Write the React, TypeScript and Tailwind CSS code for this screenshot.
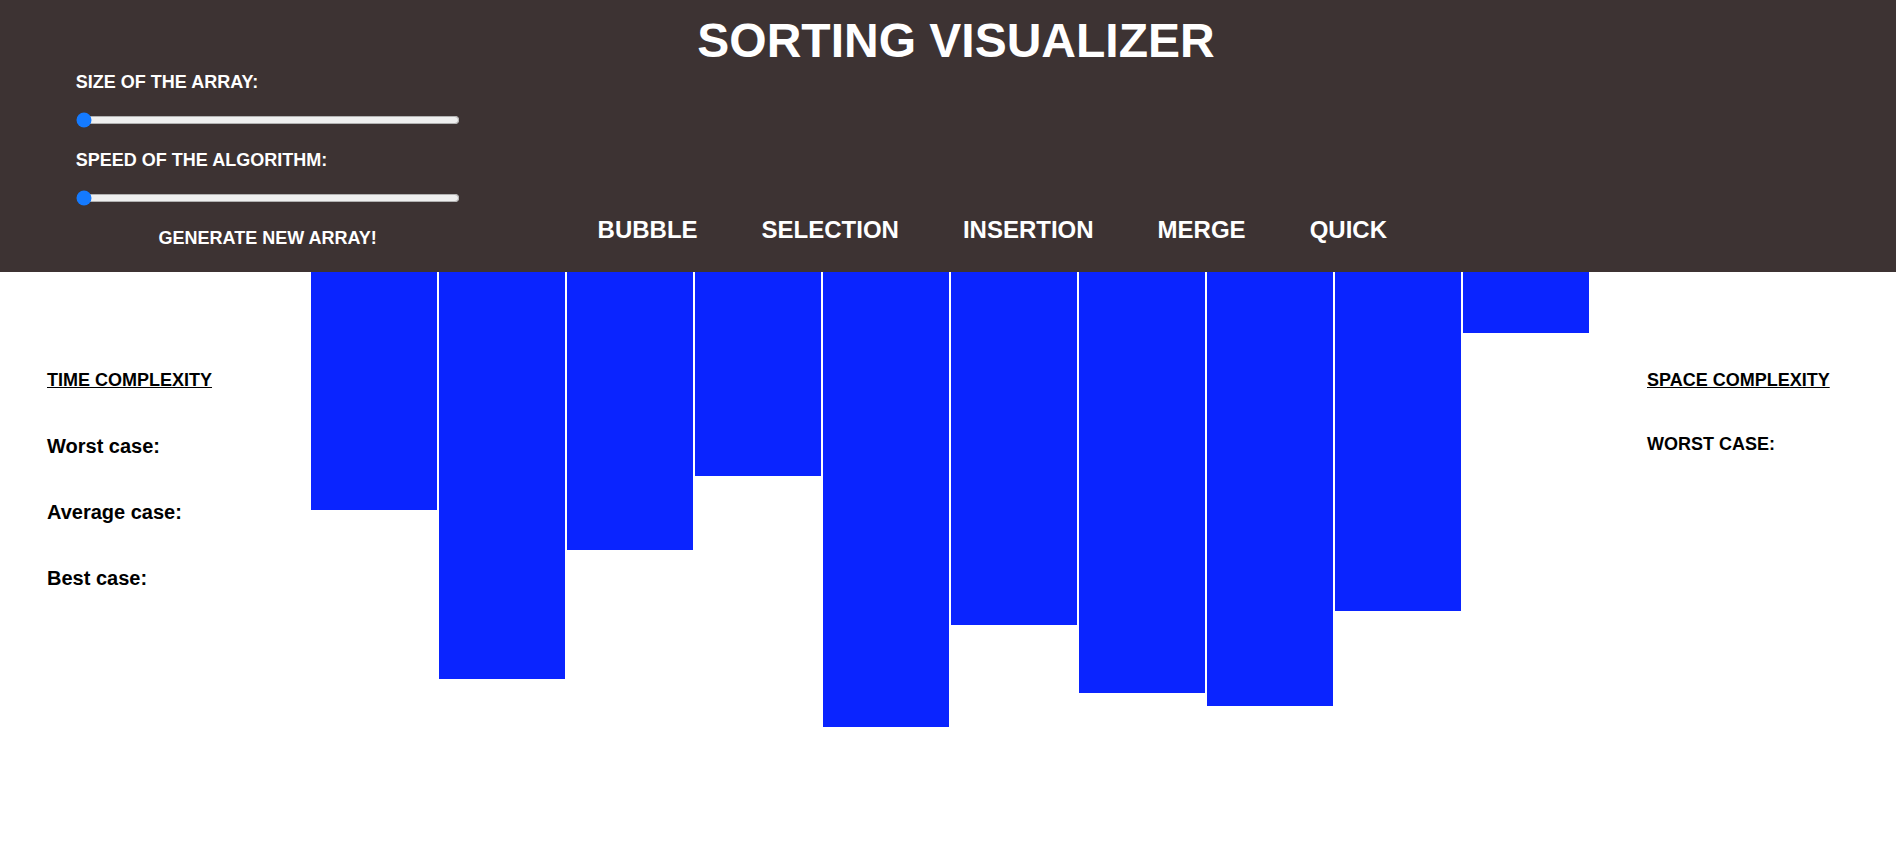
import { useState } from "react";

const UNIT = 6.787;
const INITIAL = [35, 60, 41, 30, 67, 52, 62, 64, 50, 9];
const ALGORITHMS = ["BUBBLE", "SELECTION", "INSERTION", "MERGE", "QUICK"];
const TIME_CASES = ["Worst case:", "Average case:", "Best case:"];

function Slider({ id, label }: { id: string; label: string }) {
  return (
    <div className="flex flex-col gap-[18px]">
      <label htmlFor={id} className="text-[18px] leading-6">
        {label}
      </label>
      <input
        id={id}
        type="range"
        min={0}
        max={100}
        defaultValue={0}
        className="m-0 h-4 w-full accent-[#147aff]"
      />
    </div>
  );
}

export default function App() {
  const [values, setValues] = useState(INITIAL);
  const generate = () =>
    setValues((current) => current.map(() => 5 + Math.floor(Math.random() * 65)));

  return (
    <div className="min-h-screen bg-white font-['Liberation_Sans',Arial,sans-serif] font-bold text-black">
      <header className="bg-[#3d3333] px-[4%] pt-3 pb-[22px] text-white">
        <h1 className="pl-4 text-center text-5xl leading-[58px]">SORTING VISUALIZER</h1>
        <div className="flex items-end">
          <div className="flex w-[22%] flex-col gap-5">
            <Slider id="size" label="SIZE OF THE ARRAY:" />
            <Slider id="speed" label="SPEED OF THE ALGORITHM:" />
            <button type="button" onClick={generate} className="self-center text-[18px] leading-6">
              GENERATE NEW ARRAY!
            </button>
          </div>
          <nav className="ml-[138px] flex gap-16 pb-1">
            {ALGORITHMS.map((name) => (
              <button key={name} type="button" className="text-2xl">
                {name}
              </button>
            ))}
          </nav>
        </div>
      </header>
      <main className="flex items-start">
        <aside className="flex w-[311px] flex-col gap-[42px] pt-24 pl-[47px]">
          <h2 className="text-[18px] leading-6 underline">TIME COMPLEXITY</h2>
          {TIME_CASES.map((text) => (
            <p key={text} className="text-xl leading-6">
              {text}
            </p>
          ))}
        </aside>
        <section aria-label="Array" className="flex flex-1 items-start gap-[2px]">
          {values.map((value, index) => (
            <div
              key={index}
              className="flex-1 bg-[#0a24ff]"
              style={{ height: Math.round(value * UNIT) }}
            />
          ))}
        </section>
        <aside className="flex w-[307px] flex-col gap-10 pt-24 pl-[58px]">
          <h2 className="text-[18px] leading-6 underline">SPACE COMPLEXITY</h2>
          <p className="text-[18px] leading-6">WORST CASE:</p>
        </aside>
      </main>
    </div>
  );
}
